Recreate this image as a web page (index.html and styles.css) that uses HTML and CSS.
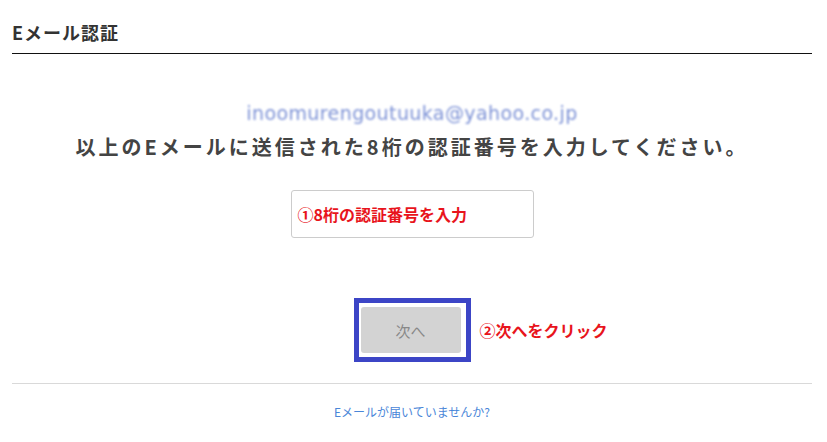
FILE: index.html
```html
<!doctype html>
<html lang="ja">
  <head>
    <meta charset="UTF-8" />
    <meta name="viewport" content="width=device-width, initial-scale=1.0" />
    <title>Eメール認証</title>
    <link rel="stylesheet" href="styles.css">
  </head>
  <body>
    <div class="container">
      <div class="header">
        <h1>Eメール認証</h1>
      </div>

      <p class="email">inoomurengoutuuka@yahoo.co.jp</p>
      <p class="lead">以上のEメールに送信された8桁の認証番号を入力してください。</p>

      <div class="code-row">
        <div class="code-box">
          <span class="note">①8桁の認証番号を入力</span>
        </div>
      </div>

      <div class="action-row">
        <div class="highlight">
          <button class="next-button" disabled>次へ</button>
        </div>
        <span class="note note-side">②次へをクリック</span>
      </div>

      <div class="footer">
        <a href="#" class="resend">Eメールが届いていませんか?</a>
      </div>
    </div>
  </body>
</html>
```

FILE: styles.css
```css
:root {
  --text-color: #333333;
  --note-color: #e8141c;
  --frame-color: #3c45c6;
  --link-color: #4a86d8;
  --border-color: #d9d9d9;
}

body {
  font-family: "Noto Sans CJK JP", "Noto Sans", sans-serif;
  margin: 0;
  padding: 0;
  background-color: #ffffff;
  color: var(--text-color);
}

.container {
  padding: 0 15px 0 12px;
}

.header {
  padding-top: 20px;
  padding-bottom: 9px;
  border-bottom: 1px solid #111111;
}

h1 {
  margin: 0;
  font-size: 18px;
  line-height: 24px;
  font-weight: bold;
  letter-spacing: 1px;
  color: #333333;
}

.email {
  margin: 45px 0 0;
  text-align: center;
  font-family: "DejaVu Sans", sans-serif;
  font-size: 19px;
  line-height: 28px;
  color: #7d92d6;
  letter-spacing: 0.4px;
  filter: blur(0.9px);
}

.lead {
  margin: 3px 0 0;
  text-align: center;
  font-size: 20px;
  line-height: 34px;
  font-weight: bold;
  letter-spacing: 3px;
  color: #444444;
}

.code-row {
  display: flex;
  justify-content: center;
  margin-top: 26px;
}

.code-box {
  display: flex;
  align-items: center;
  width: 235px;
  height: 46px;
  padding-left: 6px;
  border: 1px solid #cccccc;
  border-radius: 3px;
  box-sizing: content-box;
}

.note {
  color: var(--note-color);
  font-weight: bold;
  font-size: 15px;
}

.code-box .note {
  font-size: 16px;
}

.action-row {
  display: grid;
  grid-template-columns: 1fr auto 1fr;
  align-items: center;
  margin-top: 60px;
}

.highlight {
  grid-column: 2;
  border: 5px solid var(--frame-color);
  padding: 4px 5px 4px 2px;
}

.next-button {
  display: block;
  width: 100px;
  height: 46px;
  border: none;
  border-radius: 3px;
  background-color: #d3d3d3;
  color: #888888;
  font-family: inherit;
  font-size: 15px;
}

.note-side {
  margin-left: 9px;
  font-size: 16px;
}

.footer {
  margin-top: 21px;
  padding-top: 14px;
  border-top: 1px solid var(--border-color);
  text-align: center;
}

.resend {
  font-size: 12px;
  line-height: 20px;
  color: var(--link-color);
  text-decoration: none;
}
```
